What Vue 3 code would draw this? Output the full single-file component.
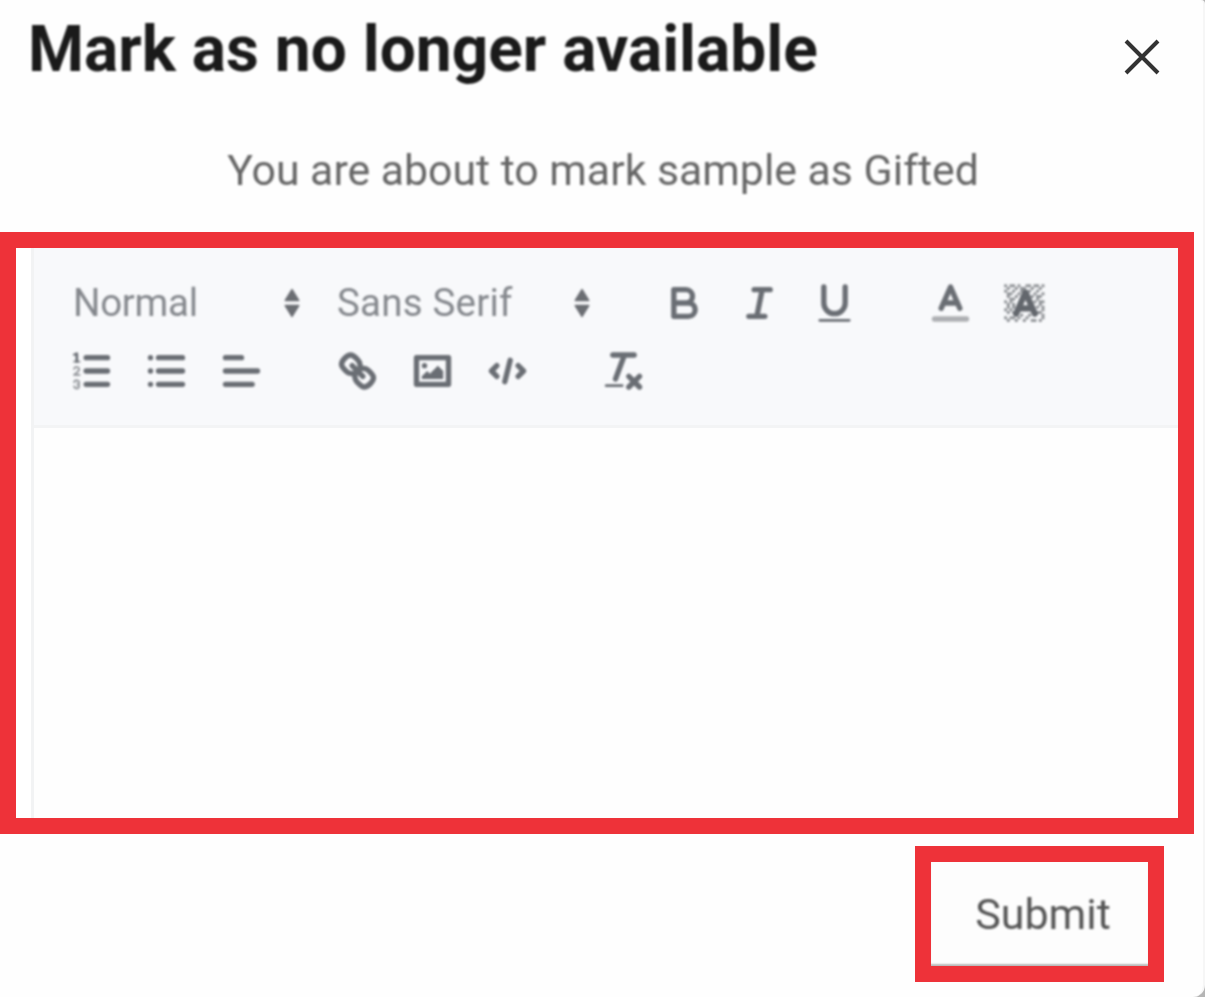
<script setup>
const bgSquares = [[4,4],[2,6],[3,5],[4,7],[2,12],[2,9],[2,15],[3,8],[12,2],[11,3],[2,3],[6,2],[3,2],[5,3],[9,2],[15,14],[13,7],[15,5],[14,6],[15,8],[14,9],[14,3],[15,2],[12,5],[13,4],[9,14],[8,15],[5,15],[11,15],[14,15],[15,11],[5,6],[6,5],[3,11],[4,10],[10,4],[7,4],[7,13],[8,3],[13,10],[3,14],[11,6],[12,8],[6,14],[10,13],[14,12],[2,5],[3,7],[4,9],[2,10],[4,12],[13,6],[14,8],[15,10],[13,12],[15,13],[4,14],[12,15],[7,3],[10,2],[13,2],[4,2],[1,4],[1,8],[1,11],[1,14],[1,2]]
</script>

<template>
  <div class="page">
    <header class="head">
      <h1 class="title">Mark as no longer available</h1>
      <svg class="close" viewBox="0 0 36 36" aria-label="Close">
        <path d="M2 2 34 34M34 2 2 34" />
      </svg>
    </header>
    <p class="lead">You are about to mark sample as Gifted</p>

    <section class="mark editor-mark">
      <div class="editor">
        <div class="toolbar">
          <div class="group">
            <div class="picker picker-head">
              <span>Normal</span>
              <svg class="arrows" viewBox="0 0 18 18"><path d="M6.500 8 9 4l2.500 4ZM6.500 10 9 14l2.500-4Z" /></svg>
            </div>
            <div class="picker picker-font">
              <span class="wide">Sans Serif</span>
              <svg class="arrows" viewBox="0 0 18 18"><path d="M6.500 8 9 4l2.500 4ZM6.500 10 9 14l2.500-4Z" /></svg>
            </div>
          </div>
          <div class="group">
            <svg class="tool" viewBox="0 0 18 18"><path d="M5 4h4.500a2.500 2.500 0 0 1 0 5H5ZM5 9h5.500a2.500 2.500 0 0 1 0 5H5Z" /></svg>
            <svg class="tool" viewBox="0 0 18 18"><path d="M7 4h6M5 14h6M8 14l2-10" /></svg>
            <svg class="tool" viewBox="0 0 18 18"><path d="M5 3v6a4 4 0 0 0 4 4 4 4 0 0 0 4-4V3" /><rect class="fill" x="3" y="15" width="12" height="1" rx=".5" /></svg>
          </div>
          <div class="group">
            <svg class="tool" viewBox="0 0 18 18"><path class="faint" d="M3 15h12" /><path d="M5.500 11 9 3l3.500 8M11.630 9H6.380" /></svg>
            <svg class="tool tool-bg" viewBox="0 0 18 18">
              <rect v-for="([x, y], i) in bgSquares" :key="i" class="fill" :x="x" :y="y" width="1.100" height="1.100" />
              <path d="M5.500 13 9 5l3.500 8M11.630 11H6.380" />
            </svg>
          </div>
          <div class="group">
            <svg class="tool" viewBox="0 0 18 18">
              <path d="M7 4h8M7 9h8M7 14h8" />
              <path class="thin" d="M2.500 5.500h2M4.500 10.500h-2c0-.234 1.850-1.076 1.850-2.234A.959.959 0 0 0 2.500 8.156M2.500 14.846a.959.959 0 0 0 1.850-.109A.7.7 0 0 0 3.750 14a.688.688 0 0 0 .6-.736.959.959 0 0 0-1.850-.109" />
              <path class="fill" d="M3.500 6A.5.5 0 0 1 3 5.500V3.085l-.276.138A.5.5 0 0 1 2.053 3c-.124-.247-.023-.324.224-.447l1-.5A.5.5 0 0 1 4 2.500v3A.5.5 0 0 1 3.500 6Z" />
            </svg>
            <svg class="tool" viewBox="0 0 18 18"><path d="M6 4h9M6 9h9M6 14h9M3 4h.01M3 9h.01M3 14h.01" /></svg>
            <svg class="tool" viewBox="0 0 18 18"><path d="M3 9h12M3 14h10M3 4h6" /></svg>
          </div>
          <div class="group">
            <svg class="tool" viewBox="0 0 18 18">
              <path d="M7 7l4 4" />
              <path d="M8.900 4.577a3.476 3.476 0 0 1 .36 4.679A3.476 3.476 0 0 1 4.577 8.900C3.185 7.500 2.035 6.400 4.217 4.217S7.500 3.185 8.900 4.577Z" />
              <path d="M13.423 9.100a3.476 3.476 0 0 0-4.679-.36 3.476 3.476 0 0 0 .36 4.679c1.392 1.392 2.500 2.542 4.679.36s1.032-3.279-.36-4.679Z" />
            </svg>
            <svg class="tool" viewBox="0 0 18 18">
              <rect x="3" y="4" width="12" height="10" />
              <circle class="fill" cx="6" cy="7" r="1" />
              <path class="fill" d="M5 12v-1l2-2 1 1 3-3 2 2v3Z" />
            </svg>
            <svg class="tool" viewBox="0 0 18 18"><path d="M5 7 3 9l2 2M13 7l2 2-2 2M10 5 8 13" /></svg>
          </div>
          <div class="group">
            <svg class="tool" viewBox="0 0 18 18">
              <path d="M5 3h8M6 12l3.350-9M11 11l4 4M15 11l-4 4" />
              <rect class="fill" x="2" y="14" width="7" height="1" rx=".5" />
            </svg>
          </div>
        </div>
        <div class="body"></div>
      </div>
    </section>

    <div class="actions">
      <div class="mark submit-mark">
        <button class="submit" type="button"><span>Submit</span></button>
      </div>
    </div>
  </div>
</template>

<style>
html, body { margin: 0; background: #b5b5b5; }
</style>

<style scoped>
.page {
  width: 1205px;
  height: 997px;
  overflow: hidden;
  box-sizing: border-box;
  background: #fefefe;
  border-radius: 0 4px 12px 0;
  border-right: 2px solid #f6f6f6;
  font-family: Roboto, "Liberation Sans", sans-serif;
}
.head {
  display: flex;
  justify-content: space-between;
  align-items: flex-start;
  height: 124px;
  padding: 12px 43px 0 28px;
  box-sizing: border-box;
}
.title {
  margin: 0;
  font-size: 64px;
  line-height: 76px;
  font-weight: 700;
  color: #1a1a1a;
  white-space: nowrap;
  filter: blur(1.200px);
}
.close {
  width: 36px;
  height: 36px;
  margin-top: 27px;
  filter: blur(.5px);
}
.close path {
  fill: none;
  stroke: #333;
  stroke-width: 4;
}
.lead {
  margin: 0;
  height: 108px;
  padding: 20px 0 0 3px;
  box-sizing: border-box;
  text-align: center;
  font-size: 42.800px;
  line-height: 52px;
  color: #666;
  filter: blur(1.200px);
}
.mark {
  border: 16px solid #ee3239;
  box-sizing: border-box;
}
.editor-mark {
  width: 1194px;
  height: 602px;
  padding-left: 15px;
  background: #fff;
}
.editor {
  height: 100%;
  display: flex;
  flex-direction: column;
  border-left: 3px solid #f2f3f4;
}
.toolbar {
  display: flex;
  flex-wrap: wrap;
  align-content: flex-start;
  row-gap: 3px;
  column-gap: 41px;
  box-sizing: border-box;
  height: 180px;
  padding: 22px 20px 0 20px;
  background: #f8f9fb;
  border-bottom: 3px solid #f3f4f5;
}
.group {
  display: flex;
  height: 65px;
  align-items: center;
  filter: blur(1.100px);
}
.picker {
  display: flex;
  align-items: center;
  justify-content: space-between;
  box-sizing: border-box;
  height: 65px;
  padding-left: 19px;
  font-size: 38.500px;
  letter-spacing: -.3px;
  color: #85888d;
}
.picker .wide { letter-spacing: .2px; }
.picker-head { width: 264px; padding-right: 2px; }
.picker-font { width: 288px; }
.arrows { width: 48px; height: 48px; }
.arrows path { fill: #6b6e73; stroke: #6b6e73; stroke-width: .6; stroke-linejoin: round; }
.tool {
  display: block;
  width: 48px;
  height: 48px;
  padding: 0 13.500px;
  overflow: visible;
}
.tool path, .tool rect, .tool circle {
  fill: none;
  stroke: #6a6e74;
  stroke-width: 2;
  stroke-linecap: round;
  stroke-linejoin: round;
}
.tool .fill { fill: #6a6e74; stroke: none; }
.tool .thin { stroke-width: .8; stroke: #9a9da1; }
.tool .faint { stroke: #aeb0b3; }
.tool-bg path { stroke: #63676d; stroke-width: 2.300; }
.tool-bg .fill { fill: #8f9296; }
.body { flex: 1; background: #fefefe; }
.actions {
  display: flex;
  justify-content: flex-end;
  padding: 12px 39px 0 0;
}
.submit-mark {
  width: 249px;
  height: 136px;
}
.submit {
  display: block;
  width: 100%;
  height: 100%;
  padding: 0 0 0 7px;
  border: 0;
  background: #fdfdfd;
  box-shadow: inset 0 -3px 2px -1px #b9b9b9;
  font-family: inherit;
  font-size: 43px;
  color: #555;
}
.submit span { display: inline-block; filter: blur(1.200px); }
</style>
